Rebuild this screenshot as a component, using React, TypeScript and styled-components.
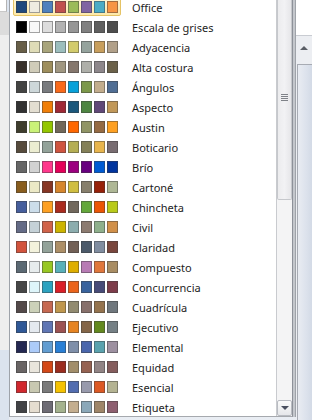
import React from "react";
import styled, { createGlobalStyle } from "styled-components";

const GlobalStyle = createGlobalStyle`
  html, body {
    margin: 0;
    padding: 0;
    background: #dce4ef;
  }
  #root {
    width: 312px;
    height: 420px;
    overflow: hidden;
  }
`;

type Theme = { name: string; colors: string[] };

const THEMES: Theme[] = [
  { name: "Office", colors: ["#1f497d", "#eeece1", "#4f81bd", "#c0504d", "#9bbb59", "#8064a2", "#4bacc6", "#f79646"] },
  { name: "Escala de grises", colors: ["#000000", "#f8f8f8", "#dddddd", "#b2b2b2", "#969696", "#808080", "#5f5f5f", "#4d4d4d"] },
  { name: "Adyacencia", colors: ["#675e47", "#dfdcb7", "#a9a57c", "#9cbebd", "#d2cb6c", "#95a39d", "#c89f5d", "#b1a089"] },
  { name: "Alta costura", colors: ["#37302a", "#d0ccb9", "#9e8e5c", "#a09781", "#85776d", "#aeafa9", "#8d878b", "#6b6149"] },
  { name: "Ángulos", colors: ["#434342", "#cdd7d9", "#797b7e", "#f96a1b", "#08a1d9", "#7c984a", "#c2ad8d", "#506e94"] },
  { name: "Aspecto", colors: ["#323232", "#e3ded1", "#f07f09", "#9f2936", "#1b587c", "#4e8542", "#604878", "#c19859"] },
  { name: "Austin", colors: ["#3e3d2d", "#caf278", "#94c600", "#71685a", "#ff6700", "#909465", "#956b43", "#fea022"] },
  { name: "Boticario", colors: ["#564b3c", "#ecedd1", "#93a299", "#cf543f", "#b5ae53", "#848058", "#e8b54d", "#786c71"] },
  { name: "Brío", colors: ["#666666", "#d2d2d2", "#ff388c", "#e40059", "#9c007f", "#68007f", "#005bd3", "#00349e"] },
  { name: "Cartoné", colors: ["#895d1d", "#ece9c6", "#873624", "#d6862d", "#d0be40", "#877f6c", "#972109", "#aeb795"] },
  { name: "Chincheta", colors: ["#465e9c", "#ccddea", "#fda023", "#aa2b1e", "#71685c", "#64a73b", "#eb5605", "#b9ca1a"] },
  { name: "Civil", colors: ["#646b86", "#c5d1d7", "#d16349", "#ccb400", "#8cadae", "#8c7b70", "#8fb08c", "#d19049"] },
  { name: "Claridad", colors: ["#d2533c", "#f3f2dc", "#93a299", "#ad8f67", "#726056", "#4c5a6a", "#808da0", "#79463d"] },
  { name: "Compuesto", colors: ["#5b6973", "#e7eced", "#98c723", "#59b0b9", "#deae00", "#b77bb4", "#e0773c", "#a98d63"] },
  { name: "Concurrencia", colors: ["#464646", "#def5fa", "#2da2bf", "#da1f28", "#eb641b", "#39639d", "#474b78", "#7d3c4a"] },
  { name: "Cuadrícula", colors: ["#534949", "#ccd1b9", "#c66951", "#bf974d", "#928b70", "#87706b", "#94734e", "#6f777d"] },
  { name: "Ejecutivo", colors: ["#2f5897", "#e4e9ef", "#6076b4", "#9c5252", "#e68422", "#846648", "#63891f", "#758085"] },
  { name: "Elemental", colors: ["#242852", "#accbf9", "#629dd1", "#297fd5", "#7f8fa9", "#4a66ac", "#5aa2ae", "#9d90a0"] },
  { name: "Equidad", colors: ["#696464", "#e9e5dc", "#d34817", "#9b2d1f", "#a28e6a", "#956251", "#918485", "#855d5d"] },
  { name: "Esencial", colors: ["#d1282e", "#c8c8b1", "#7a7a7a", "#f5c201", "#526db0", "#989aac", "#dc5924", "#b4b392"] },
  { name: "Etiqueta", colors: ["#414245", "#e5ddd0", "#6e6c75", "#a4b28e", "#c4ae8f", "#8ba8b9", "#9f8669", "#8e5f70"] },
];

const Page = styled.div`
  display: flex;
  width: 312px;
  height: 420px;
  overflow: hidden;
  font-family: "Noto Sans", "Open Sans", sans-serif;
`;

// Background window, left of the menu
const LeftGutter = styled.div`
  width: 9px;
  display: flex;
  flex-direction: column;
`;

const GutterBlock = styled.div<{ $h?: number; $bg: string }>`
  height: ${(p) => (p.$h ? `${p.$h}px` : "auto")};
  flex: ${(p) => (p.$h ? "none" : "1")};
  background: ${(p) => p.$bg};
`;

const GutterTop = styled.div`
  height: 11px;
  width: 6px;
  background: #ffffff;
  border-right: 1px solid #b4b4b4;
  border-bottom: 1px solid #c8c8c8;
`;

const MenuColumn = styled.div`
  width: 287px;
  display: flex;
  flex-direction: column;
  background: #e9edf3;
`;

const Menu = styled.div`
  height: 416px;
  display: flex;
  background: #ffffff;
  border-left: 1px solid #9ea3aa;
  border-right: 1px solid #8d9199;
  border-bottom: 1px solid #a6a9ae;
  box-shadow: 2px 0 0 #c4c7cc, 3px 0 0 #9fa3a9;
  margin-right: 3px;
`;

const List = styled.div`
  flex: 1;
  overflow: hidden;
`;

const Rows = styled.div`
  margin-top: -3px;
  padding-left: 3px;
`;

const Row = styled.div`
  height: 20px;
  display: flex;
  align-items: center;
`;

const SwatchGroup = styled.div<{ $selected?: boolean }>`
  display: flex;
  gap: 2px;
  padding: 2px;
  border: 1px solid ${(p) => (p.$selected ? "#e5c365" : "transparent")};
  border-radius: 2px;
  background: ${(p) =>
    p.$selected ? "linear-gradient(#fdf6d8, #fde9a9)" : "transparent"};
`;

const Swatch = styled.div`
  width: 11px;
  height: 12px;
  box-sizing: border-box;
  border: 1px solid rgba(60, 60, 60, 0.45);
`;

const ThemeName = styled.span`
  margin-left: 11px;
  font-size: 11px;
  color: #1e1e1e;
  white-space: nowrap;
`;

// Menu scrollbar
const ScrollBar = styled.div`
  width: 15px;
  border-left: 1px solid #c9cbcf;
  display: flex;
  flex-direction: column;
  background: #f4f4f5;
`;

const Thumb = styled.div`
  margin-top: -4px;
  height: 204px;
  box-sizing: border-box;
  border: 1px solid #c6c8cc;
  border-top: none;
  border-radius: 0 0 2px 2px;
  background: linear-gradient(90deg, #ececee, #f2f2f4 50%, #e6e6e9);
  display: flex;
  align-items: center;
  justify-content: center;
`;

const Grip = styled.div`
  width: 7px;
  height: 7px;
  margin-top: 0px;
  background: repeating-linear-gradient(
    #7f8288 0 1px,
    transparent 1px 2px
  );
`;

const Track = styled.div`
  flex: 1;
`;

const ArrowButton = styled.div`
  height: 16px;
  box-sizing: border-box;
  border: 1px solid #b9bcc2;
  border-radius: 2px;
  background: linear-gradient(#fbfbfb, #e6e7ea);
  display: flex;
  align-items: center;
  justify-content: center;
`;

const ArrowDown = styled.div`
  width: 0;
  height: 0;
  border-left: 4px solid transparent;
  border-right: 4px solid transparent;
  border-top: 4px solid #4a5060;
`;

const ArrowUp = styled.div`
  width: 0;
  height: 0;
  border-left: 4px solid transparent;
  border-right: 4px solid transparent;
  border-bottom: 4px solid #5a5e66;
`;

// Background window strip on the right
const RightStrip = styled.div`
  width: 16px;
  display: flex;
  flex-direction: column;
  background: #eceef2;
`;

const StripTop = styled.div`
  height: 35px;
  background: #ffffff;
  border-bottom: 1px solid #c9ccd2;
`;

const StripArrow = styled.div`
  height: 28px;
  display: flex;
  align-items: center;
  justify-content: center;
  padding-bottom: 4px;
  box-sizing: border-box;
`;

const StripThumb = styled.div`
  flex: 1;
  margin-left: 1px;
  border-left: 1px solid #a7abb3;
  border-top: 1px solid #a7abb3;
  background: linear-gradient(90deg, #e9ecf2, #dce2ec 60%, #d3dae6);
`;

const App: React.FC = () => {
  return (
    <>
      <GlobalStyle />
      <Page>
        <LeftGutter>
          <GutterTop />
          <GutterBlock $h={23} $bg="#dcdcdc" />
          <GutterBlock $h={315} $bg="#eeeeee" />
          <GutterBlock $bg="#dbe3ee" />
        </LeftGutter>

        <MenuColumn>
          <Menu>
            <List>
              <Rows>
                {THEMES.map((t, i) => (
                  <Row key={t.name}>
                    <SwatchGroup $selected={i === 0}>
                      {t.colors.map((c, j) => (
                        <Swatch key={j} style={{ background: c }} />
                      ))}
                    </SwatchGroup>
                    <ThemeName>{t.name}</ThemeName>
                  </Row>
                ))}
              </Rows>
            </List>

            <ScrollBar>
              <Thumb>
                <Grip />
              </Thumb>
              <Track />
              <ArrowButton>
                <ArrowDown />
              </ArrowButton>
            </ScrollBar>
          </Menu>
        </MenuColumn>

        <RightStrip>
          <StripTop />
          <StripArrow>
            <ArrowUp />
          </StripArrow>
          <StripThumb />
        </RightStrip>
      </Page>
    </>
  );
};

export default App;
